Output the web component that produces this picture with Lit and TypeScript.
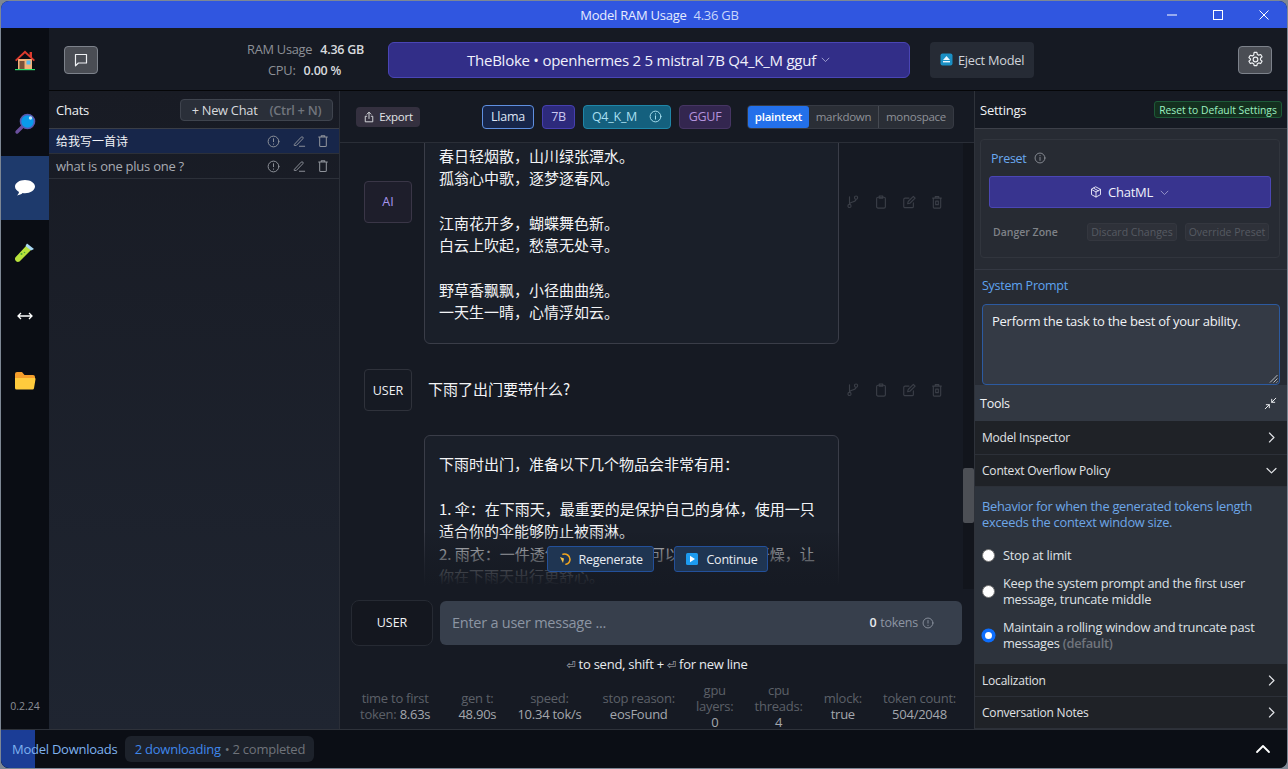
import { LitElement, html, css, svg } from "lit";
import { customElement } from "lit/decorators.js";

const stroke = (inner: unknown, size = 14, sw = 1.3) => html`<svg width=${size} height=${size} viewBox="0 0 16 16" fill="none" stroke="currentColor" stroke-width=${sw} stroke-linecap="round" stroke-linejoin="round">${inner}</svg>`;
const info = (s = 13) => stroke(svg`<circle cx="8" cy="8" r="6.6"/><path d="M8 7.2v4M8 4.6v.4"/>`, s, 1.2);
const infoDown = (s = 13) => stroke(svg`<circle cx="8" cy="8" r="6.6"/><path d="M8 4.6v3.6M8 11v.4"/>`, s, 1.2);
const pencil = (s = 14) => stroke(svg`<path d="M3 11.5 10.5 3.6a1.3 1.3 0 0 1 1.9 1.8L5 13H3zM8.5 14h6"/>`, s, 1.1);
const trash = (s = 14) => stroke(svg`<path d="M3 3.5h10M6 3.5V2h4v1.5M4.2 3.5V13a1.3 1.3 0 0 0 1.3 1.3h5A1.3 1.3 0 0 0 11.8 13V3.5"/>`, s, 1.2);
const branch = stroke(svg`<circle cx="4" cy="12.5" r="1.8"/><circle cx="11.5" cy="3" r="1.8"/><path d="M4 2v8.7M11.5 4.8c0 4-7.5 2.5-7.5 6"/>`, 14, 1.3);
const clip = stroke(svg`<rect x="3" y="2.6" width="10" height="12.4" rx="1.6"/><path d="M6 1.2h4v2.4H6z"/>`, 14, 1.3);
const edit = stroke(svg`<path d="M13 9v4a1.5 1.5 0 0 1-1.5 1.5h-8A1.5 1.5 0 0 1 2 13V5a1.5 1.5 0 0 1 1.5-1.5H8M6.5 10l.6-2.6L13 1.6l2 2-6 5.8z"/>`, 14, 1.3);
const bin = stroke(svg`<path d="M3 3.5h10M6 3.5V1.8h4v1.7M3.8 3.5V14a1 1 0 0 0 1 1h6.4a1 1 0 0 0 1-1V3.5M6.5 7h3v4h-3z"/>`, 14, 1.3);
const chevR = stroke(svg`<path d="M5.5 2.5 11 8l-5.5 5.5"/>`, 13, 1.5);
const chevD = stroke(svg`<path d="M2.5 5.5 8 11l5.5-5.5"/>`, 13, 1.5);
const chevSmall = stroke(svg`<path d="M3 6l5 5 5-5"/>`, 11, 1.3);
const exportIc = stroke(svg`<path d="M8 10V1.8M5.4 4.2 8 1.6l2.6 2.6M5 7H3v7.4h10V7h-2"/>`, 12, 1.2);
const cube = stroke(svg`<path d="M8 1.3 14 4.5v7L8 14.7 2 11.5v-7zM2 4.5 8 8l6-3.5M8 8v6.7M5 3l6 3.4"/>`, 12, 1.2);
const collapse = stroke(svg`<path d="M14.5 1.5 9.5 6.5M9.5 2.8v3.7h3.7M1.5 14.5l5-5M6.5 13.2V9.5H2.8"/>`, 13, 1.2);
const gear = stroke(svg`<circle cx="8" cy="8" r="2.2"/><path d="M6.7 1.3h2.6l.4 1.9 1.3.7 1.9-.6 1.3 2.2-1.5 1.3v1.5l1.5 1.3-1.3 2.2-1.9-.6-1.3.7-.4 1.9H6.7l-.4-1.9-1.3-.7-1.9.6-1.3-2.2 1.5-1.3V7.5L1.8 6.2l1.3-2.2 1.9.6 1.3-.7z"/>`, 17, 1.1);
const bubble = stroke(svg`<path d="M2.5 2.5h11v8.5H5.4L2.5 13.8z"/>`, 16, 1.2);

const houseIc = svg`<svg width="22" height="22" viewBox="0 0 22 22"><path d="M4 20V10h14v10z" fill="#f3b27a"/><path d="M11 1.6 1 11l1.3 1.2L11 4.2l8.7 8 1.3-1.2-3-2.8V3h-2.4v3z" fill="#dd3b2e"/><rect x="5.5" y="12" width="5" height="8" fill="#7b4f3a"/><rect x="12.5" y="11.5" width="4" height="4" fill="#5cb8ec"/><rect x="1" y="20" width="20" height="1.2" fill="#2fdc6c"/></svg>`;
const lensIc = svg`<svg width="22" height="22" viewBox="0 0 22 22"><path d="M9 13 3 19" stroke="#6a4f9d" stroke-width="3.4" stroke-linecap="round"/><circle cx="13.5" cy="8.5" r="7" fill="#0a9bea" stroke="#5a59b0" stroke-width="1.6"/><circle cx="16.5" cy="5" r="1.7" fill="#bfe9ff"/></svg>`;
const chatIc = svg`<svg width="22" height="20" viewBox="0 0 22 20"><path d="M11 2C5.5 2 1 4.9 1 8.6c0 2.3 1.6 4.2 4 5.4-.2 1.4-1 2.6-2 3.4 2.2-.1 4.2-1 5.6-2.3.8.1 1.6.2 2.4.2 5.5 0 10-3 10-6.7S16.500 2 11 2z" fill="#fff"/></svg>`;
const tubeIc = svg`<svg width="22" height="22" viewBox="0 0 22 22"><path d="M13 3 19 8l-2 1L5.500 20.500a3 3 0 0 1-4-4.200L12 5z" fill="#b8e23c"/><path d="M13 2.500 20 8l-3 1.500-5.500-4.500z" fill="#a9d8f5"/><circle cx="7.500" cy="13" r="1" fill="#4aa838"/><circle cx="10.500" cy="11.500" r=".8" fill="#4aa838"/></svg>`;
const arrowIc = svg`<svg width="16" height="8" viewBox="0 0 16 8" fill="none" stroke="#fff" stroke-width="1.300"><path d="M1 4h14M4 1 1 4l3 3M12 1l3 3-3 3"/></svg>`;
const folderIc = svg`<svg width="22" height="20" viewBox="0 0 22 20"><path d="M1 4a2 2 0 0 1 2-2h5l2.500 3H19a2 2 0 0 1 2 2v3H1z" fill="#f59e2c"/><path d="M1 18V8h0l1 0h18.500a1 1 0 0 1 1 1.200l-1.500 9a1.500 1.500 0 0 1-1.500 1.300H2.500A1.500 1.500 0 0 1 1 18z" fill="#ffcb3d"/></svg>`;
const regenIc = svg`<svg width="14" height="14" viewBox="0 0 14 14" fill="none"><path d="M5 2.200a5.500 5.500 0 0 1 7 5 5.200 5.200 0 0 1-4 5" stroke="#f0a41e" stroke-width="1.600" stroke-linecap="round"/><path d="M2 5l4 1.500L5 11z" fill="#f7c34a"/></svg>`;
const playIc = svg`<svg width="14" height="14" viewBox="0 0 14 14"><rect x="1" y="1" width="12" height="12" rx="1.500" fill="#1d9bf0"/><path d="M5 3.800 10 7l-5 3.200z" fill="#fff"/></svg>`;
const ejectIc = svg`<svg width="13" height="13" viewBox="0 0 13 13"><rect x=".5" y=".5" width="12" height="12" rx="2" fill="#1a8fc4"/><path d="M6.500 3 10 7H3z" fill="#e8f6ff"/><rect x="3" y="8" width="7" height="1.400" fill="#e8f6ff"/></svg>`;

const poem = ["春日轻烟散，山川绿张潭水。", "孤翁心中歌，逐梦逐春风。", "", "江南花开多，蝴蝶舞色新。", "白云上吹起，愁意无处寻。", "", "野草香飘飘，小径曲曲绕。", "一天生一晴，心情浮如云。"];
const answer = ["下雨时出门，准备以下几个物品会非常有用：", "", "1. 伞：在下雨天，最重要的是保护自己的身体，使用一只", "适合你的伞能够防止被雨淋。", "2. 雨衣：一件透气防水的雨衣也可以帮助你保持干燥，让", "你在下雨天出行更舒心。"];
const stats: [string[], string][] = [[["time to first", "token:"], "8.63s"], [["gen t:"], "48.90s"], [["speed:"], "10.34 tok/s"], [["stop reason:"], "eosFound"], [["gpu", "layers:"], "0"], [["cpu", "threads:"], "4"], [["mlock:"], "true"], [["token count:"], "504/2048"]];

@customElement("app-root")
export class AppRoot extends LitElement {
  static styles = css`
    :host { display: block; width: 1288px; height: 769px; background: #7d8794; overflow: hidden;
      font-family: "Open Sans", "Noto Sans CJK SC", sans-serif; font-size: 13px; color: #e8eaee; letter-spacing: -0.25px; }
    * { box-sizing: border-box; }
    svg { display: block; flex: none; }
    .win { margin: 1px; height: 767px; width: 1286px; border-radius: 8px; overflow: hidden; display: grid;
      grid-template-rows: 27px 63px 1fr 39px; grid-template-columns: 48px 1fr; background: #161a23; }
    .title { grid-column: 1 / 3; background: #3056e0; display: flex; align-items: center; justify-content: center; position: relative; font-size: 13px; color: #e6ecff; padding-left: 31px; }
    .title b { font-weight: 400; margin-left: 7px; color: #c9d6fb; }
    .winbtns { position: absolute; right: 0; top: 0; height: 27px; display: flex; align-items: center; gap: 36px; padding-right: 18px; color: #fff; }
    .nav { background: #0a0d14; display: flex; flex-direction: column; grid-row: 2 / 4; }
    .nav a { height: 64px; display: flex; align-items: center; justify-content: center; flex: none; }
    .nav a.on { background: #1e3a6c; }
    .nav .ver { margin-top: auto; height: 46px; display: flex; align-items: center; justify-content: center; color: #8b8f96; font-size: 10.5px; letter-spacing: 0; }
    .top { background: #161a23; border-bottom: 1px solid #050608; display: flex; align-items: center; padding: 1px 0 0 15px; }
    .sq { width: 34px; height: 28px; background: #4a4d54; border: 1px solid #7d828b; border-radius: 4px; display: flex; align-items: center; justify-content: center; color: #eef0f3; flex: none; }
    .ram { width: 266px; text-align: right; font-size: 12.8px; line-height: 21px; color: #8d9097; }
    .ram b { font-weight: 600; color: #d8dade; margin-left: 5px; font-size: 12.5px; }
    .ram .c { padding-right: 23px; }
    .model { margin-left: 24px; width: 522px; height: 36px; background: #322e88; border: 1px solid #4a45b5; border-radius: 6px; display: flex; align-items: center; justify-content: center; gap: 4px; font-size: 15px; color: #f0f0fb; }
    .model span { color: #a9a8d6; }
    .eject { margin-left: 20px; width: 104px; height: 36px; background: #262b35; border-radius: 4px; display: flex; align-items: center; justify-content: center; gap: 5px; font-size: 12.8px; color: #d0d4da; }
    .gear { margin-left: 204px; }
    .body { display: grid; grid-template-columns: 291px 634px 1fr; min-height: 0; }
    .chats { background: linear-gradient(#181b24, #1f2531); border-right: 1px solid #2a2e37; display: flex; flex-direction: column; }
    .chead { height: 38px; display: flex; align-items: center; justify-content: space-between; padding: 0 6px 0 7px; border-bottom: 1px solid #3a3e47; flex: none; font-size: 13px; color: #eef0f3; }
    .newc { width: 153px; height: 22px; background: #2a2f39; border: 1px solid #3f444e; border-radius: 4px; display: flex; align-items: center; justify-content: center; gap: 12px; color: #d8dade; font-size: 12.8px; }
    .newc span { color: #71757d; font-weight: 600; }
    .row { height: 25px; display: flex; align-items: center; padding: 0 9px 0 7px; border-bottom: 1px solid #2c3039; font-size: 13px; color: #a8abb2; flex: none; }
    .row.on { background: #17264a; color: #f2f4f8; }
    .row .name { flex: 1; }
    .row .cjk { font-size: 12px; letter-spacing: 0; }
    .row .ic { display: flex; align-items: center; gap: 10px; color: #8f939b; }
    .row .ic svg:first-child { margin-right: 2.5px; }
    .center { background: #161a23; display: flex; flex-direction: column; min-width: 0; position: relative; }
    .chd { height: 52px; flex: none; border-bottom: 1px solid #2a2e37; display: flex; align-items: center; padding: 0 19px 0 16px; }
    .exp { width: 64px; height: 20px; background: #34303f; border-radius: 4px; display: flex; align-items: center; justify-content: center; gap: 4px; font-size: 11.5px; color: #e2e4e8; margin-right: 62px; }
    .chip { height: 24px; border-radius: 4px; display: flex; align-items: center; justify-content: center; gap: 12px; margin-right: 8px; font-size: 12.5px; border: 1px solid; }
    .llama { width: 52px; background: #17264a; border-color: #5f8fe0; color: #dfe6f5; }
    .b7 { width: 33px; background: #2d2a7c; border-color: #4640b0; color: #c9c8f0; }
    .q4 { width: 88px; background: #14607e; border-color: #1f86a8; color: #a8dff0; }
    .gguf { width: 52px; background: #33264f; border-color: #463563; color: #b392dd; margin-right: 16px; }
    .seg { width: 207px; height: 24px; display: flex; background: #2a2e36; border: 1px solid #363a43; border-radius: 4px; font-size: 11.5px; color: #8e9198; }
    .seg div { display: flex; align-items: center; justify-content: center; border-left: 1px solid #464a52; }
    .seg .s1 { width: 61px; background: #2370ea; color: #fff; font-weight: 600; border: none; border-radius: 3px; }
    .seg .s2 { width: 69px; border-left: none; }
    .seg .s3 { flex: 1; }
    .scroll { flex: none; height: 446px; overflow: hidden; position: relative; }
    .msg { display: grid; grid-template-columns: 48px 415px auto; column-gap: 12px; align-items: center; padding-left: 24px; }
    .first { margin-top: -84px; }
    .user { margin-top: 25px; }
    .answer { margin-top: 24px; align-items: start; }
    .av { width: 48px; height: 42px; border-radius: 4px; border: 1px solid #2f323b; display: flex; align-items: center; justify-content: center; font-size: 12.5px; color: #eef0f3; letter-spacing: 0; }
    .av.ai { background: #1e1e2b; border-color: #3a3647; color: #a795ef; }
    .bub { background: #1a1f29; border: 1px solid #3a3d48; border-radius: 6px; padding: 17px 14px 19px; font-family: "Noto Sans CJK SC", "Open Sans", sans-serif; font-size: 15px; line-height: 22.4px; color: #f3f4f6; letter-spacing: 0; }
    .bub .l { height: 22.4px; white-space: nowrap; }
    .first .bub { padding-top: 84.5px; padding-bottom: 19.5px; }
    .say { margin-left: 4px; padding-bottom: 4px; font-family: "Noto Sans CJK SC", sans-serif; font-size: 15px; color: #f3f4f6; letter-spacing: 0; }
    .acts { display: flex; gap: 14px; color: #3a3e47; margin-left: -5px; }
    .fade { position: absolute; left: 0; right: 0; bottom: 0; height: 56px; background: linear-gradient(rgba(22,26,35,0.1), rgba(22,26,35,0.72) 55%, #161a23 95%); }
    .over { position: absolute; left: 0; right: 0; top: 403px; display: flex; justify-content: center; gap: 20px; }
    .ob { height: 26px; background: #1f3552; border: 1px solid #23509a; border-radius: 3px; display: flex; align-items: center; padding: 0 0 0 10px; font-size: 12.5px; color: #e9edf3; }
    .ob.r { width: 107px; gap: 7px; } .ob.c { width: 94px; gap: 8px; }
    .bar { position: absolute; right: 0; top: 52px; width: 11px; height: 446px; background: #12151c; }
    .thumb { position: absolute; right: 0; top: 325px; width: 11px; height: 55px; background: #4c4f55; border-radius: 2px; }
    .compose { display: flex; gap: 7px; padding: 11px 12px 0 11px; flex: none; }
    .cu { width: 82px; height: 46px; padding-bottom: 1px; border: 1px solid #262a33; border-radius: 8px; display: flex; align-items: center; justify-content: center; font-size: 12.5px; color: #f0f2f5; background: #14171f; letter-spacing: 0; }
    .inp { flex: 1; height: 44px; margin-top: 1px; background: #373f4c; border-radius: 6px; display: flex; align-items: center; padding: 0 28px 1px 12px; font-size: 14.5px; color: #8c95a3; }
    .inp .tk { margin-left: auto; font-size: 12.5px; color: #8d95a2; display: flex; align-items: center; gap: 4px; }
    .inp .tk b { color: #e8eaee; font-weight: 600; }
    .hint { text-align: center; margin-top: 9px; height: 18px; line-height: 18px; font-size: 13px; color: #e8eaee; font-weight: 500; flex: none; }
    .hint i { font-style: normal; color: #b0b3b9; font-family: "DejaVu Sans", sans-serif; font-size: 11px; }
    .stats { display: flex; justify-content: space-between; align-items: center; padding: 0 18px 0 20px; margin-top: 9px; flex: none; font-size: 13px; line-height: 16px; color: #5c6068; text-align: center; height: 48px; }
    .stats div:first-child { margin-right: 7px; }
    .stats b { font-weight: 400; color: #a4a7ad; }
    .right { background: #272b33; border-left: 1px solid #2e323a; display: flex; flex-direction: column; min-width: 0; }
    .rhead { height: 38px; background: #161a23; border-bottom: 1px solid #3d4049; display: flex; align-items: center; justify-content: space-between; padding: 0 5px 0 5px; flex: none; font-size: 13px; color: #f0f2f5; }
    .reset { width: 128px; height: 17px; background: #14301f; border: 1px solid #1d5a38; border-radius: 3px; display: flex; align-items: center; justify-content: center; color: #9cf0c0; font-size: 10.3px; letter-spacing: 0; white-space: nowrap; }
    .sets { padding: 10px 7px 0 5px; flex: none; }
    .card { height: 119px; border: 1px solid #31353d; border-radius: 4px; padding: 9px 8px 0; }
    .pl { display: flex; align-items: center; gap: 7px; padding-left: 2px; height: 18px; font-size: 12.5px; color: #6aa9f0; }
    .pl svg { color: #8f939b; }
    .cm { margin-top: 9px; height: 32px; background: #38348f; border: 1px solid #4b46b4; border-radius: 3px; display: flex; align-items: center; justify-content: center; gap: 6px; font-size: 13px; color: #f0f0fb; }
    .cm span { color: #9d9bce; }
    .dz { display: flex; align-items: center; margin-top: 15px; padding-left: 4px; font-size: 10.5px; color: #7f8288; font-weight: 600; letter-spacing: 0; }
    .dz .g { height: 18px; background: #2e3139; border: 1px solid #34373f; border-radius: 3px; display: flex; align-items: center; justify-content: center; color: #565a62; font-weight: 400; }
    .dz .d { width: 90px; margin-left: auto; } .dz .o { width: 84px; margin-left: 8px; margin-right: 2px; }
    .sp { flex: none; border-top: 1px solid #343842; margin-top: 11px; padding: 7px 7px 0 7px; }
    .spl { height: 17px; line-height: 17px; font-size: 12.5px; color: #5ea3f0; }
    .ta { margin-top: 10px; height: 81px; background: #343a45; border: 1px solid #2c5aa0; border-radius: 4px; padding: 7px 9px; font-size: 13px; color: #f0f2f5; position: relative; }
    .grip { position: absolute; right: 1px; bottom: 1px; }
    .tools { height: 36px; background: #323842; display: flex; align-items: center; justify-content: space-between; padding: 0 10px 0 5px; font-size: 12.5px; color: #f0f2f5; flex: none; }
    .acc { height: 34px; flex: none; background: #1f2227; border-bottom: 1px solid #2c3038; display: flex; align-items: center; justify-content: space-between; padding: 0 9px 0 7px; font-size: 12px; font-weight: 500; color: #e0e2e6; letter-spacing: -0.2px; }
    .acc.s { height: 32px; }
    .acc.m { height: 33px; }
    .pol { background: #2d333c; height: 177px; flex: none; padding: 11px 7px 0; }
    .pol p { margin: 0 0 17px; font-size: 12.8px; line-height: 16px; color: #6ea7e8; }
    .rd { display: flex; align-items: center; gap: 8px; font-size: 12.8px; line-height: 16px; color: #dfe1e5; margin-bottom: 12px; }
    .dot { width: 13px; height: 13px; border-radius: 50%; background: #fff; flex: none; border: 1px solid #767676; }
    .dot.on { border: 3px solid #0d6efd; box-shadow: 0 0 0 .5px #0d6efd; }
    .rd em { font-style: normal; color: #71757d; font-weight: 600; }
    .foot { grid-column: 1 / 3; background: #0b0e15; border-top: 1px solid #2e323a; display: flex; align-items: center; position: relative; }
    .prog { position: absolute; left: 0; top: 0; bottom: 0; width: 34px; background: #1b3d96; }
    .fl { position: relative; padding: 0 0 1px 11px; font-size: 13px; color: #7fb2ef; }
    .fc { position: relative; margin-left: 8px; width: 189px; height: 26px; padding-bottom: 1px; background: #1d222b; border-radius: 6px; display: flex; align-items: center; justify-content: center; gap: 4px; font-size: 13px; color: #6f737a; }
    .fc span { color: #3f87ea; }
    .up { margin-left: auto; margin-right: 16px; color: #fff; }
  `;

  private acts() { return html`<div class="acts">${branch}${clip}${edit}${bin}</div>`; }

  render() {
    return html`<div class="win">
      <div class="title">Model RAM Usage <b>4.36 GB</b>
        <div class="winbtns">
          <svg width="10" height="10" viewBox="0 0 10 10" fill="none" stroke="#fff"><path d="M0 5h10"/></svg>
          <svg width="10" height="10" viewBox="0 0 10 10" fill="none" stroke="#fff"><rect x=".5" y=".5" width="9" height="9"/></svg>
          <svg width="10" height="10" viewBox="0 0 10 10" fill="none" stroke="#fff"><path d="M.5.5l9 9M9.5.5l-9 9"/></svg>
        </div>
      </div>
      <div class="nav">
        <a>${houseIc}</a><a>${lensIc}</a><a class="on">${chatIc}</a><a>${tubeIc}</a><a>${arrowIc}</a><a>${folderIc}</a>
        <div class="ver">0.2.24</div>
      </div>
      <div class="top">
        <div class="sq">${bubble}</div>
        <div class="ram"><div>RAM Usage <b>4.36 GB</b></div><div class="c">CPU: <b>0.00 %</b></div></div>
        <div class="model">TheBloke • openhermes 2 5 mistral 7B Q4_K_M gguf <span>${chevSmall}</span></div>
        <div class="eject">${ejectIc} Eject Model</div>
        <div class="sq gear">${gear}</div>
      </div>
      <div class="body">
        <div class="chats">
          <div class="chead">Chats <div class="newc">+ New Chat <span>(Ctrl + N)</span></div></div>
          <div class="row on"><div class="name cjk">给我写一首诗</div><div class="ic">${infoDown()}${pencil()}${trash()}</div></div>
          <div class="row"><div class="name">what is one plus one ?</div><div class="ic">${infoDown()}${pencil()}${trash()}</div></div>
        </div>
        <div class="center">
          <div class="chd">
            <div class="exp">${exportIc} Export</div>
            <div class="chip llama">Llama</div><div class="chip b7">7B</div>
            <div class="chip q4">Q4_K_M ${info()}</div><div class="chip gguf">GGUF</div>
            <div class="seg"><div class="s1">plaintext</div><div class="s2">markdown</div><div class="s3">monospace</div></div>
          </div>
          <div class="scroll">
            <div class="msg first"><div class="av ai">AI</div><div class="bub">${poem.map(l => html`<div class="l">${l}</div>`)}</div>${this.acts()}</div>
            <div class="msg user"><div class="av">USER</div><div class="say">下雨了出门要带什么?</div>${this.acts()}</div>
            <div class="msg answer"><div></div><div class="bub">${answer.map(l => html`<div class="l">${l}</div>`)}<div class="l"></div><div class="l"></div></div></div>
            <div class="fade"></div>
            <div class="over">
              <div class="ob r">${regenIc} Regenerate</div>
              <div class="ob c">${playIc} Continue</div>
            </div>
          </div>
          <div class="bar"><div class="thumb"></div></div>
          <div class="compose">
            <div class="cu">USER</div>
            <div class="inp">Enter a user message ...<div class="tk"><b>0</b> tokens ${infoDown(12)}</div></div>
          </div>
          <div class="hint"><i>⏎</i> to send, shift + <i>⏎</i> for new line</div>
          <div class="stats">${stats.map(([k, v]) => k.length === 2 && v.length === 1
            ? html`<div>${k[0]}<br />${k[1]}<br /><b>${v}</b></div>`
            : k.length === 2
              ? html`<div>${k[0]}<br />${k[1]} <b>${v}</b></div>`
              : html`<div>${k[0]}<br /><b>${v}</b></div>`)}</div>
        </div>
        <div class="right">
          <div class="rhead">Settings <div class="reset">Reset to Default Settings</div></div>
          <div class="sets"><div class="card">
            <div class="pl">Preset ${info(12)}</div>
            <div class="cm">${cube} ChatML <span>${chevSmall}</span></div>
            <div class="dz">Danger Zone <div class="g d">Discard Changes</div><div class="g o">Override Preset</div></div>
          </div></div>
          <div class="sp">
            <div class="spl">System Prompt</div>
            <div class="ta">Perform the task to the best of your ability.
              <svg class="grip" width="9" height="9" viewBox="0 0 9 9" stroke="#b8bcc2" fill="none"><path d="M8.500 1 1 8.500M8.500 4.500 4.500 8.500M8.500 7.500 7.500 8.500"/></svg>
            </div>
          </div>
          <div class="tools">Tools ${collapse}</div>
          <div class="acc">Model Inspector ${chevR}</div>
          <div class="acc s">Context Overflow Policy ${chevD}</div>
          <div class="pol">
            <p>Behavior for when the generated tokens length exceeds the context window size.</p>
            <div class="rd"><div class="dot"></div><div>Stop at limit</div></div>
            <div class="rd"><div class="dot"></div><div>Keep the system prompt and the first user message, truncate middle</div></div>
            <div class="rd"><div class="dot on"></div><div>Maintain a rolling window and truncate past messages <em>(default)</em></div></div>
          </div>
          <div class="acc m">Localization ${chevR}</div>
          <div class="acc s">Conversation Notes ${chevR}</div>
        </div>
      </div>
      <div class="foot">
        <div class="prog"></div>
        <div class="fl">Model Downloads</div>
        <div class="fc"><span>2 downloading</span> • 2 completed</div>
        <div class="up">${stroke(svg`<path d="M2 11l6-6 6 6"/>`, 16, 1.8)}</div>
      </div>
    </div>`;
  }
}
